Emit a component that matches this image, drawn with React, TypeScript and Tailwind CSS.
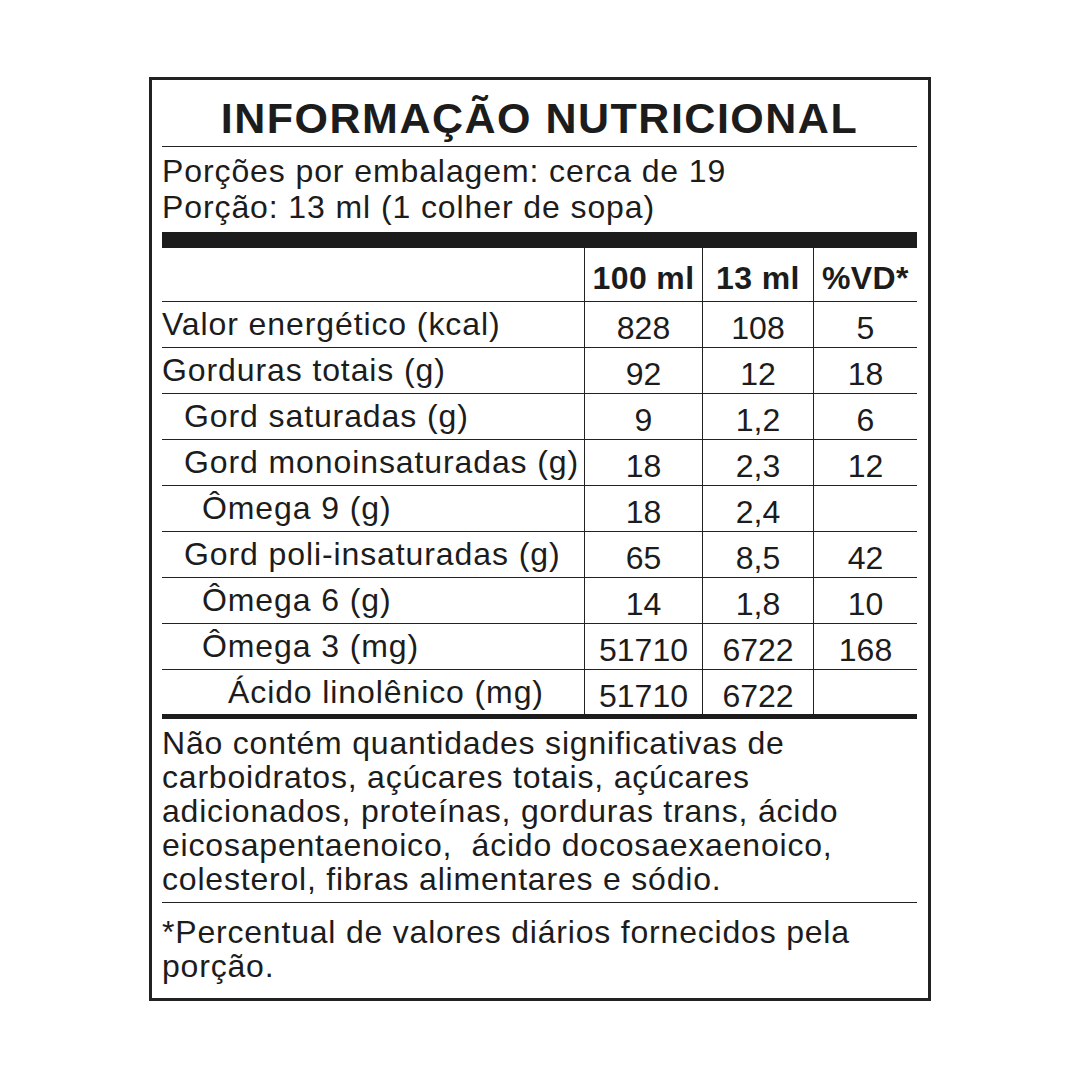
import React from "react";

type Row = {
  label: string;
  level: 0 | 1 | 2 | 3;
  per100: string;
  perPortion: string;
  vd: string;
};

const rows: Row[] = [
  { label: "Valor energético (kcal)", level: 0, per100: "828", perPortion: "108", vd: "5" },
  { label: "Gorduras totais (g)", level: 0, per100: "92", perPortion: "12", vd: "18" },
  { label: "Gord saturadas (g)", level: 1, per100: "9", perPortion: "1,2", vd: "6" },
  { label: "Gord monoinsaturadas (g)", level: 1, per100: "18", perPortion: "2,3", vd: "12" },
  { label: "Ômega 9 (g)", level: 2, per100: "18", perPortion: "2,4", vd: "" },
  { label: "Gord poli-insaturadas (g)", level: 1, per100: "65", perPortion: "8,5", vd: "42" },
  { label: "Ômega 6 (g)", level: 2, per100: "14", perPortion: "1,8", vd: "10" },
  { label: "Ômega 3 (mg)", level: 2, per100: "51710", perPortion: "6722", vd: "168" },
  { label: "Ácido linolênico (mg)", level: 3, per100: "51710", perPortion: "6722", vd: "" },
];

const indent = ["pl-0", "pl-[22px]", "pl-[40px]", "pl-[66px]"];

const cols = "grid grid-cols-[423px_118px_111px_103px]";

const App = () => {
  return (
    <div
      className="w-[1080px] h-[1080px] bg-white text-[#1c1c1c] pt-[77px] pl-[149px]"
      style={{ fontFamily: '"Liberation Sans", Arial, sans-serif' }}
    >
      <div className="w-[782px] h-[924px] border-[3px] border-[#222] pl-[10px] pr-[11px]">
        {/* Title */}
        <div className="border-b border-[#222] pt-[17px] pb-[6px] text-center">
          <h1 className="text-[43px] leading-[43px] font-bold tracking-[1.5px]">
            INFORMAÇÃO NUTRICIONAL
          </h1>
        </div>

        {/* Portions */}
        <div className="pt-[6px] pb-[7px] text-[32px] leading-[36px] tracking-[0.9px]">
          <p>Porções por embalagem: cerca de 19</p>
          <p>Porção: 13 ml (1 colher de sopa)</p>
        </div>
        <div className="h-[16px] bg-[#1c1c1c]" />

        {/* Table */}
        <div className={`${cols} h-[54px] border-b border-[#222] text-[32px] font-bold leading-[36px] tracking-[0.4px] text-center`}>
          <div className="border-r border-[#222]" />
          <div className="border-r border-[#222] pt-[12px]">100 ml</div>
          <div className="border-r border-[#222] pt-[12px]">13 ml</div>
          <div className="pt-[12px]">%VD*</div>
        </div>
        {rows.map((r, i) => {
          const last = i === rows.length - 1;
          return (
            <div
              key={r.label}
              className={`${cols} text-[32px] leading-[36px] ${last ? "h-[44px]" : "h-[46px] border-b border-[#222]"}`}
            >
              <div
                className={`border-r border-[#222] whitespace-nowrap tracking-[0.9px] pt-[4px] ${indent[r.level]}`}
              >
                {r.label}
              </div>
              <div className="border-r border-[#222] text-center pt-[8px]">{r.per100}</div>
              <div className="border-r border-[#222] text-center pt-[8px]">{r.perPortion}</div>
              <div className="text-center pt-[8px]">{r.vd}</div>
            </div>
          );
        })}
        <div className="h-[5px] bg-[#1c1c1c]" />

        {/* Footnotes */}
        <div className="border-b border-[#222] pt-[7px] pb-[6px] text-[32px] leading-[34px] tracking-[0.8px] whitespace-nowrap">
          <p>
            Não contém quantidades significativas de
            <br />
            carboidratos, açúcares totais, açúcares
            <br />
            adicionados, proteínas, gorduras trans, ácido
            <br />
            eicosapentaenoico,&nbsp; ácido docosaexaenoico,
            <br />
            colesterol, fibras alimentares e sódio.
          </p>
        </div>
        <div className="pt-[12px] text-[32px] leading-[34px] tracking-[0.8px] whitespace-nowrap">
          <p>
            *Percentual de valores diários fornecidos pela
            <br />
            porção.
          </p>
        </div>
      </div>
    </div>
  );
};

export default App;
